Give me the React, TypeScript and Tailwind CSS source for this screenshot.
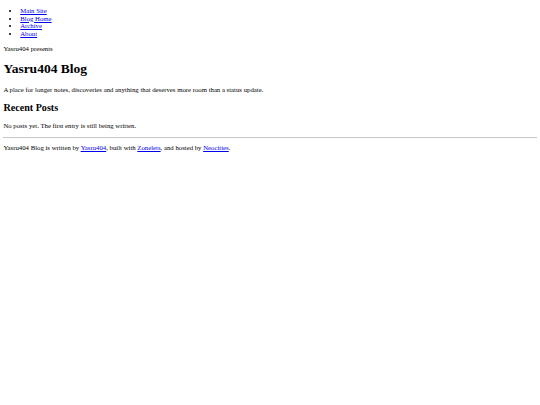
import React from "react";

const links = ["Main Site", "Blog Home", "Archive", "About"];

const A: React.FC<{ children: React.ReactNode }> = ({ children }) => (
  <a href="#" className="text-[#0000EE] underline">
    {children}
  </a>
);

export default function App() {
  return (
    <div className="min-h-screen bg-white text-black font-['Liberation_Serif',serif] text-[6.75px] leading-[1.15] px-[3.375px] py-[0.1px]">
      <ul className="list-disc pl-[16.875px] my-[6.75px]">
        {links.map((l) => (
          <li key={l}>
            <A>{l}</A>
          </li>
        ))}
      </ul>
      <p className="my-[6.75px]">Yasru404 presents</p>
      <h1 className="text-[13.5px] font-bold my-[9.05px]">Yasru404 Blog</h1>
      <p className="my-[6.75px]">
        A place for longer notes, discoveries and anything that deserves more room than a status update.
      </p>
      <h2 className="text-[10.125px] font-bold my-[8.4px]">Recent Posts</h2>
      <p className="my-[6.75px]">No posts yet. The first entry is still being written.</p>
      <hr className="my-[3.375px] border-t border-[#c8c8c8]" />
      <p className="my-[6.75px]">
        Yasru404 Blog is written by <A>Yasru404</A>, built with <A>Zonelets</A>, and hosted by{" "}
        <A>Neocities</A>.
      </p>
    </div>
  );
}
